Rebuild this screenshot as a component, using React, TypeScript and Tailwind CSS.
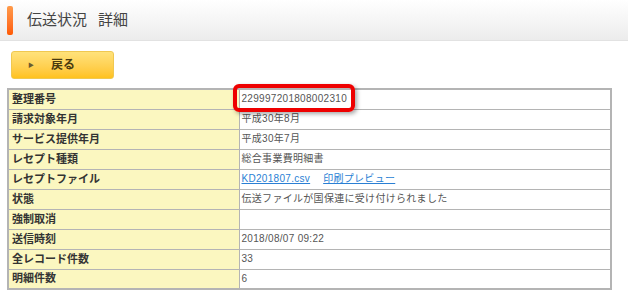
import React from 'react';

const rows: { label: string; value: React.ReactNode }[] = [
  { label: '整理番号', value: '229997201808002310' },
  { label: '請求対象年月', value: '平成30年8月' },
  { label: 'サービス提供年月', value: '平成30年7月' },
  { label: 'レセプト種類', value: '総合事業費明細書' },
  {
    label: 'レセプトファイル',
    value: (
      <span className="flex gap-[13px]">
        <span className="text-[#2a7fd4] underline">KD201807.csv</span>
        <span className="text-[#2a7fd4] underline">印刷プレビュー</span>
      </span>
    ),
  },
  { label: '状態', value: '伝送ファイルが国保連に受け付けられました' },
  { label: '強制取消', value: '' },
  { label: '送信時刻', value: '2018/08/07 09:22' },
  { label: '全レコード件数', value: '33' },
  { label: '明細件数', value: '6' },
];

export default function App() {
  return (
    <div
      className="w-[628px] h-[296px] bg-white overflow-hidden"
      style={{ fontFamily: '"Liberation Sans", "Noto Sans CJK JP", sans-serif' }}
    >
      {/* Header */}
      <div className="h-[41px] flex items-center gap-[14px] pl-[7px] bg-gradient-to-b from-white to-[#ececec] border-b border-[#e2e2e2]">
        <div className="w-[6px] h-[29px] rounded-[2px] bg-gradient-to-b from-[#ff9a4a] to-[#ff5a00]" />
        <h1 className="text-[15px] text-[#444]">
          伝送状況<span className="ml-[11px]">詳細</span>
        </h1>
      </div>

      {/* Back button */}
      <div className="pt-[10px] pl-[11px]">
        <button className="w-[103px] h-[28px] flex items-center pl-[16px] gap-[17px] rounded-[3px] border border-[#f0c850] bg-gradient-to-b from-[#ffe27a] to-[#ffc21a] text-[12px] font-bold text-[#4a3a10]">
          <span className="text-[6px] text-[#6a5a30]">▶</span>
          <span>戻る</span>
        </button>
      </div>

      {/* Detail table */}
      <div className="relative mt-[9px] ml-[7px] w-[605px]">
        <table className="w-full border-collapse border-2 border-[#b4b4b4]">
          <tbody>
            {rows.map((r) => (
              <tr key={r.label} className="h-[20px]">
                <td className="w-[231px] border border-[#b4b4b4] bg-[#fbf7c0] px-[3px] text-[11px] font-bold text-[#333] leading-none">
                  {r.label}
                </td>
                <td className="border border-[#b4b4b4] px-[2px] text-[10px] tracking-[0.3px] text-[#555] leading-none">
                  {r.value}
                </td>
              </tr>
            ))}
          </tbody>
        </table>
        {/* Highlight marker */}
        <div className="absolute left-[226px] top-[-4px] w-[122px] h-[28px] rounded-[6px] border-[4px] border-[#ee0000] shadow-[2px_2px_4px_rgba(0,0,0,0.35)]" />
      </div>
    </div>
  );
}
